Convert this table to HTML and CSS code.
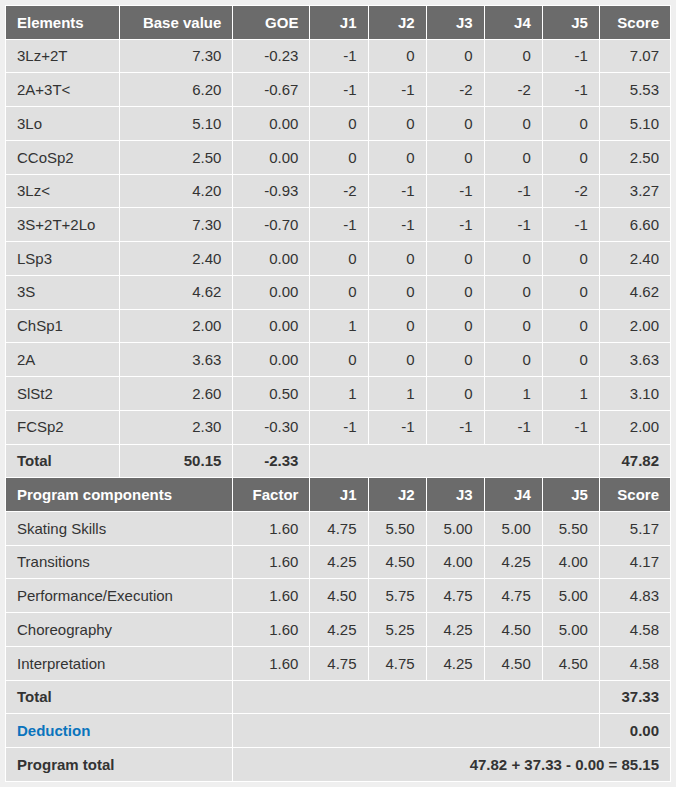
FILE: index.html
```html
<!DOCTYPE html>
<html>
<head>
<meta charset="utf-8">
<link rel="stylesheet" href="styles.css">
</head>
<body>
<div class="wrap">
<table class="scores">
<colgroup>
<col class="c-el"><col class="c-bv"><col class="c-goe"><col class="c-j"><col class="c-j"><col class="c-j"><col class="c-j"><col class="c-j5"><col class="c-sc">
</colgroup>
<tr class="head"><th class="l">Elements</th><th>Base value</th><th>GOE</th><th>J1</th><th>J2</th><th>J3</th><th>J4</th><th>J5</th><th>Score</th></tr>
<tr><td class="l">3Lz+2T</td><td>7.30</td><td>-0.23</td><td>-1</td><td>0</td><td>0</td><td>0</td><td>-1</td><td>7.07</td></tr>
<tr><td class="l">2A+3T&lt;</td><td>6.20</td><td>-0.67</td><td>-1</td><td>-1</td><td>-2</td><td>-2</td><td>-1</td><td>5.53</td></tr>
<tr><td class="l">3Lo</td><td>5.10</td><td>0.00</td><td>0</td><td>0</td><td>0</td><td>0</td><td>0</td><td>5.10</td></tr>
<tr><td class="l">CCoSp2</td><td>2.50</td><td>0.00</td><td>0</td><td>0</td><td>0</td><td>0</td><td>0</td><td>2.50</td></tr>
<tr><td class="l">3Lz&lt;</td><td>4.20</td><td>-0.93</td><td>-2</td><td>-1</td><td>-1</td><td>-1</td><td>-2</td><td>3.27</td></tr>
<tr><td class="l">3S+2T+2Lo</td><td>7.30</td><td>-0.70</td><td>-1</td><td>-1</td><td>-1</td><td>-1</td><td>-1</td><td>6.60</td></tr>
<tr><td class="l">LSp3</td><td>2.40</td><td>0.00</td><td>0</td><td>0</td><td>0</td><td>0</td><td>0</td><td>2.40</td></tr>
<tr><td class="l">3S</td><td>4.62</td><td>0.00</td><td>0</td><td>0</td><td>0</td><td>0</td><td>0</td><td>4.62</td></tr>
<tr><td class="l">ChSp1</td><td>2.00</td><td>0.00</td><td>1</td><td>0</td><td>0</td><td>0</td><td>0</td><td>2.00</td></tr>
<tr><td class="l">2A</td><td>3.63</td><td>0.00</td><td>0</td><td>0</td><td>0</td><td>0</td><td>0</td><td>3.63</td></tr>
<tr><td class="l">SlSt2</td><td>2.60</td><td>0.50</td><td>1</td><td>1</td><td>0</td><td>1</td><td>1</td><td>3.10</td></tr>
<tr><td class="l">FCSp2</td><td>2.30</td><td>-0.30</td><td>-1</td><td>-1</td><td>-1</td><td>-1</td><td>-1</td><td>2.00</td></tr>
<tr class="bold"><td class="l">Total</td><td>50.15</td><td>-2.33</td><td colspan="5"></td><td>47.82</td></tr>
<tr class="head"><th class="l" colspan="2">Program components</th><th>Factor</th><th>J1</th><th>J2</th><th>J3</th><th>J4</th><th>J5</th><th>Score</th></tr>
<tr><td class="l" colspan="2">Skating Skills</td><td>1.60</td><td>4.75</td><td>5.50</td><td>5.00</td><td>5.00</td><td>5.50</td><td>5.17</td></tr>
<tr><td class="l" colspan="2">Transitions</td><td>1.60</td><td>4.25</td><td>4.50</td><td>4.00</td><td>4.25</td><td>4.00</td><td>4.17</td></tr>
<tr><td class="l" colspan="2">Performance/Execution</td><td>1.60</td><td>4.50</td><td>5.75</td><td>4.75</td><td>4.75</td><td>5.00</td><td>4.83</td></tr>
<tr><td class="l" colspan="2">Choreography</td><td>1.60</td><td>4.25</td><td>5.25</td><td>4.25</td><td>4.50</td><td>5.00</td><td>4.58</td></tr>
<tr><td class="l" colspan="2">Interpretation</td><td>1.60</td><td>4.75</td><td>4.75</td><td>4.25</td><td>4.50</td><td>4.50</td><td>4.58</td></tr>
<tr class="bold"><td class="l" colspan="2">Total</td><td colspan="6"></td><td>37.33</td></tr>
<tr class="bold"><td class="l" colspan="2"><a class="link" href="#">Deduction</a></td><td colspan="6"></td><td>0.00</td></tr>
<tr class="bold"><td class="l" colspan="2">Program total</td><td colspan="7">47.82 + 37.33 - 0.00 = 85.15</td></tr>
</table>
</div>
</body>
</html>
```

FILE: styles.css
```css
html, body {
  margin: 0;
  padding: 0;
  background: #ffffff;
}
.wrap {
  display: inline-block;
  background: #efefef;
  padding: 5px 5px 5px 5px;
}
.scores {
  border-collapse: separate;
  border-spacing: 1px;
  background: #ffffff;
  table-layout: fixed;
  width: 666px;
  font-family: "Liberation Sans", Arial, sans-serif;
  font-size: 15px;
  color: #333333;
}
.c-el { width: 113px; }
.c-bv { width: 112px; }
.c-goe { width: 76px; }
.c-j { width: 57px; }
.c-j5 { width: 56px; }
.c-sc { width: 70px; }
.scores th,
.scores td {
  padding: 8.6px 11px 7.4px 11px;
  line-height: 16.75px;
  text-align: right;
  white-space: nowrap;
  background: #e0e0e0;
}
.scores th {
  background: #6b6b6b;
  color: #ffffff;
  font-weight: bold;
}
.scores .l {
  text-align: left;
}
.bold td {
  font-weight: bold;
}
.link {
  color: #0a74bd;
  text-decoration: none;
}
```
